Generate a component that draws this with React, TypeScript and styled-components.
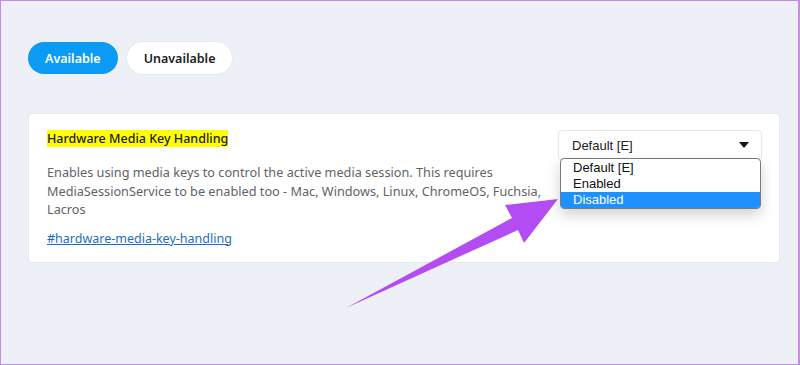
import styled, { createGlobalStyle } from "styled-components";

const GlobalStyle = createGlobalStyle`
  html, body {
    margin: 0;
    padding: 0;
    background: #edf1f7;
  }
`;

const Frame = styled.div`
  position: relative;
  box-sizing: border-box;
  width: 800px;
  height: 365px;
  border: 1px solid #c68ae8;
  border-right-width: 2px;
  background: #edf1f7;
  padding: 41px 18px 0 27px;
  font-family: "Noto Sans", "Open Sans", sans-serif;
  overflow: hidden;
`;

const Tabs = styled.div`
  display: flex;
  gap: 9px;
`;

const Tab = styled.button<{ $active?: boolean }>`
  height: 32px;
  padding: 0 17px;
  border: none;
  border-radius: 16px;
  font-family: "Noto Sans", sans-serif;
  font-size: 12.5px;
  font-weight: 600;
  background: ${(p) => (p.$active ? "#0c9bf4" : "#ffffff")};
  color: ${(p) => (p.$active ? "#ffffff" : "#202124")};
  box-shadow: ${(p) => (p.$active ? "none" : "0 0 0 1px #e6eaf0")};
`;

const Card = styled.div`
  margin-top: 39px;
  background: #ffffff;
  border: 1px solid #e3e7ee;
  border-radius: 4px;
  height: 150px;
  box-sizing: border-box;
  padding: 16px 17px 0 18px;
  display: flex;
  justify-content: space-between;
  align-items: flex-start;
`;

const Info = styled.div`
  display: flex;
  flex-direction: column;
  align-items: flex-start;
  width: 505px;
`;

const Title = styled.h3`
  margin: 0;
  font-size: 12.5px;
  font-weight: 500;
  color: #202124;
  line-height: 18px;
`;

const Highlight = styled.mark`
  background: #ffff00;
  color: inherit;
  padding: 0;
`;

const Description = styled.p`
  margin: 15px 0 0;
  font-size: 12.7px;
  line-height: 18.5px;
  color: #5f6368;
`;

const Link = styled.a`
  margin-top: 11px;
  font-size: 12.5px;
  line-height: 18px;
  color: #1b6fc2;
  text-decoration: underline;
`;

const SelectWrap = styled.div`
  position: relative;
  width: 204px;
`;

const SelectBox = styled.div`
  box-sizing: border-box;
  height: 30px;
  border: 1px solid #e6e6e6;
  border-radius: 4px;
  background: #fff;
  display: flex;
  align-items: center;
  justify-content: space-between;
  padding: 0 12px 0 13px;
  font-family: "Liberation Sans", Arial, sans-serif;
  font-size: 13px;
  color: #202124;
`;

const Caret = styled.span`
  width: 0;
  height: 0;
  border-left: 5px solid transparent;
  border-right: 5px solid transparent;
  border-top: 6px solid #111;
`;

const Options = styled.ul`
  position: absolute;
  top: 28px;
  left: 2px;
  right: 1px;
  margin: 0;
  padding: 1px 0 0;
  list-style: none;
  background: #fff;
  border: 1px solid #7a7a7a;
  border-radius: 4px;
  overflow: hidden;
  box-shadow: 0 6px 14px rgba(0, 0, 0, 0.18);
  font-family: "Liberation Sans", Arial, sans-serif;
  font-size: 13px;
`;

const Option = styled.li<{ $selected?: boolean }>`
  height: 16px;
  line-height: 16px;
  padding: 0 12px;
  color: ${(p) => (p.$selected ? "#ffffff" : "#111")};
  background: ${(p) => (p.$selected ? "#1e90ff" : "transparent")};
`;

const Arrow = styled.svg`
  position: absolute;
  left: 0;
  top: 0;
  pointer-events: none;
`;

export default function App() {
  return (
    <>
      <GlobalStyle />
      <Frame>
        <Tabs>
          <Tab $active>Available</Tab>
          <Tab>Unavailable</Tab>
        </Tabs>
        <Card>
          <Info>
            <Title>
              <Highlight>Hardware Media Key Handling</Highlight>
            </Title>
            <Description>
              Enables using media keys to control the active media session. This requires
              MediaSessionService to be enabled too - Mac, Windows, Linux, ChromeOS, Fuchsia,
              Lacros
            </Description>
            <Link href="#hardware-media-key-handling">#hardware-media-key-handling</Link>
          </Info>
          <SelectWrap>
            <SelectBox>
              Default [E]
              <Caret />
            </SelectBox>
            <Options>
              <Option>Default [E]</Option>
              <Option>Enabled</Option>
              <Option $selected>Disabled</Option>
            </Options>
          </SelectWrap>
        </Card>
        <Arrow width="800" height="365" viewBox="0 0 800 365">
          <polygon
            points="345,307 511,217 504,204 557,198 523,242 517,229"
            fill="#b34cf2"
          />
        </Arrow>
      </Frame>
    </>
  );
}
